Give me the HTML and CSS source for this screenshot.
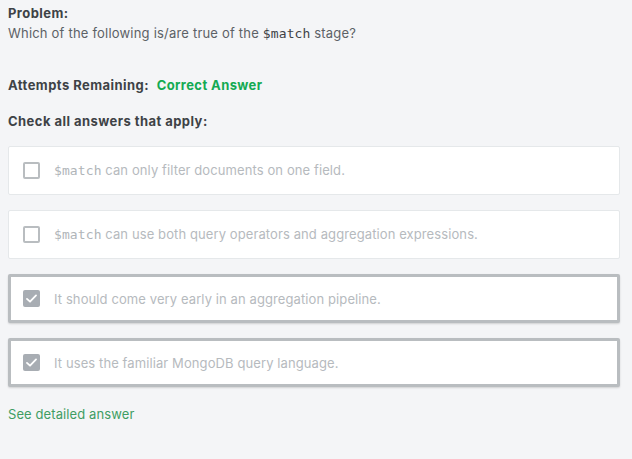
FILE: index.html
```html
<!DOCTYPE html>
<html>
<head>
<meta charset="utf-8">
<link rel="stylesheet" href="styles.css">
</head>
<body>
<div class="page">
  <div class="problem">
    <div class="label">Problem:</div>
    <div class="question">Which of the following is/are true of the <code>$match</code> stage?</div>
  </div>
  <div class="attempts"><span class="label">Attempts Remaining:</span> <span class="correct">Correct Answer</span></div>
  <div class="label check-label">Check all answers that apply:</div>
  <div class="options">
    <div class="option">
      <span class="box"></span>
      <span class="text"><code>$match</code> can only filter documents on one field.</span>
    </div>
    <div class="option">
      <span class="box"></span>
      <span class="text"><code>$match</code> can use both query operators and aggregation expressions.</span>
    </div>
    <div class="option selected">
      <span class="box checked"><svg width="15" height="15" viewBox="0 0 15 15"><path d="M3.5 7.8 L6.2 10.3 L11.5 4.8" fill="none" stroke="#fff" stroke-width="1.6" stroke-linecap="round" stroke-linejoin="round"/></svg></span>
      <span class="text">It should come very early in an aggregation pipeline.</span>
    </div>
    <div class="option selected">
      <span class="box checked"><svg width="15" height="15" viewBox="0 0 15 15"><path d="M3.5 7.8 L6.2 10.3 L11.5 4.8" fill="none" stroke="#fff" stroke-width="1.6" stroke-linecap="round" stroke-linejoin="round"/></svg></span>
      <span class="text">It uses the familiar MongoDB query language.</span>
    </div>
  </div>
  <a class="detail" href="#">See detailed answer</a>
</div>
</body>
</html>
```
FILE: styles.css
```css
html, body {
  margin: 0;
  padding: 0;
  background: #f4f5f7;
}
body {
  font-family: "Inter", "Liberation Sans", sans-serif;
  font-size: 13px;
  color: #555b60;
}
.page {
  padding: 5px 12px 20px 8px;
  display: flex;
  flex-direction: column;
}
code {
  font-family: "DejaVu Sans Mono", monospace;
  font-size: 13px;
  letter-spacing: 0.1px;
}
.label {
  font-weight: 700;
  color: #3e4246;
  letter-spacing: 0.45px;
}
.problem .label {
  line-height: 16px;
}
.question {
  margin-top: 2px;
  line-height: 20px;
  color: #5c6166;
  letter-spacing: 0.2px;
}
.question code {
  color: #3e4246;
}
.attempts {
  margin-top: 31px;
  line-height: 20px;
}
.correct {
  font-weight: 700;
  color: #13aa52;
  margin-left: 4px;
  letter-spacing: 0.4px;
}
.check-label {
  margin-top: 16px;
  line-height: 20px;
}
.options {
  margin-top: 15px;
  display: flex;
  flex-direction: column;
  gap: 15px;
}
.option {
  background: #fff;
  border: 1px solid #e5e8ea;
  border-radius: 2px;
  height: 47px;
  display: flex;
  align-items: center;
  padding-left: 14px;
  color: #b6babe;
}
.option.selected {
  border: 3px solid #b9bdc0;
  height: 43px;
  padding-left: 12px;
  box-shadow: 0 1px 2px rgba(0,0,0,0.15);
}
.option code {
  color: #b0b5b9;
}
.box {
  width: 13px;
  height: 13px;
  border: 2px solid #b9bdc0;
  border-radius: 2px;
  flex: none;
  margin-right: 14px;
  display: flex;
}
.box.checked {
  width: 17px;
  height: 17px;
  border: none;
  background: #a8adb3;
}
.box.checked svg {
  width: 17px;
  height: 17px;
}
.text {
  line-height: 20px;
  letter-spacing: 0.1px;
}
.detail {
  margin-top: 17px;
  color: #3f9d63;
  text-decoration: none;
  line-height: 20px;
  align-self: flex-start;
  letter-spacing: 0.1px;
}
```
